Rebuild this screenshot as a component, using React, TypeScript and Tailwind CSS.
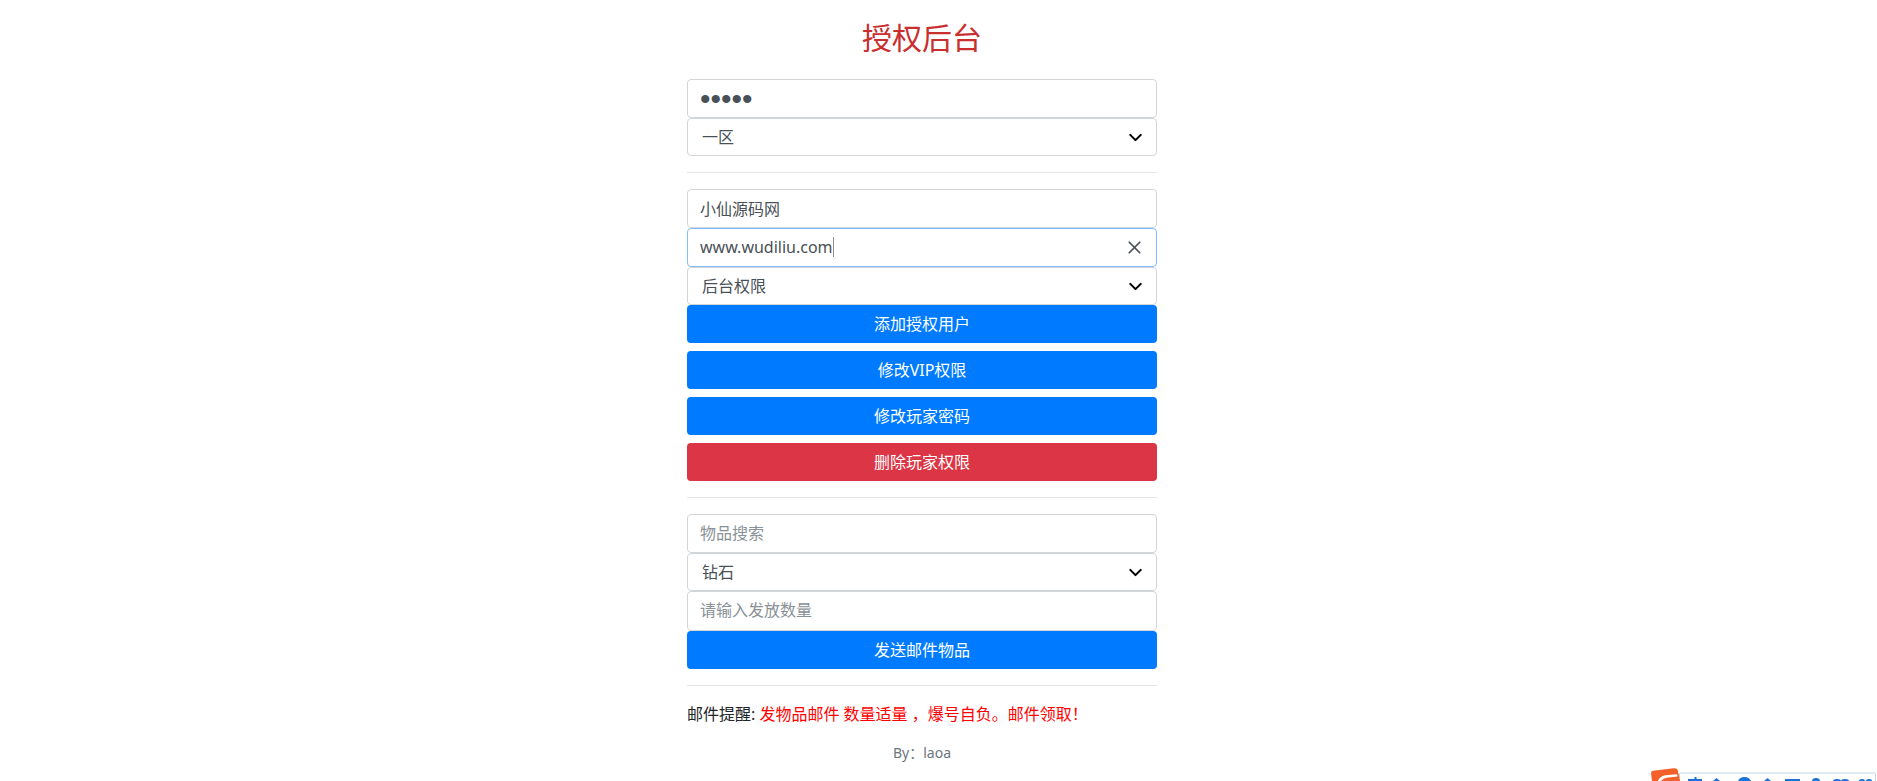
import { ChevronDown, X } from "lucide-react"

const FONT = "font-['Noto_Sans','Noto_Sans_CJK_SC',sans-serif]"

const fieldCls =
  "block w-full h-[39px] px-3 border border-[#d3d6d8] rounded bg-white text-[#495057] outline-none placeholder:text-[#8a9197]"

function Select({ value }: { value: string }) {
  return (
    <div className="relative h-[38px] border border-[#d3d6d8] rounded bg-white flex items-center pl-[14px] text-base text-[#495057]">
      <span>{value}</span>
      <ChevronDown className="absolute right-[10px] top-[8px] w-[21px] h-[21px] text-black" strokeWidth={2.4} />
    </div>
  )
}

function Button({ label, danger }: { label: string; danger?: boolean }) {
  return (
    <button
      className={
        "block w-full h-[38px] rounded text-base text-white " +
        (danger ? "bg-[#dc3545]" : "bg-[#007bff]")
      }
    >
      {label}
    </button>
  )
}

// input method toolbar, cut off by the bottom edge of the window
function ImeBar() {
  return (
    <svg className="absolute right-0 bottom-0 w-[227px] h-[13px]" viewBox="0 0 227 13">
      <rect x="29.5" y="5" width="196" height="12" rx="1" fill="#fff" stroke="#c3d3e3" />
      <path d="M1 5Q1 3 3 2.7L24 .3Q27 0 27.700 2L30 13H2Z" fill="#f4602a" />
      <path d="M9 11Q12 7 18 7L27 6.300 27.500 8.500 19 9.500Q14 9.500 11 13H8Z" fill="#fff" />
      <g fill="#1a73d8">
        <rect x="44.500" y="9" width="2" height="4" />
        <rect x="38" y="11" width="14" height="2" />
        <path d="M66.500 10L63 13H70Z" />
        <ellipse cx="94.500" cy="14" rx="6.500" ry="5" />
        <path d="M117.500 10L114 13H121Z" />
        <rect x="135" y="11" width="15" height="2" />
        <ellipse cx="166" cy="13.500" rx="4" ry="3.500" />
        <ellipse cx="187" cy="13" rx="4" ry="2" />
        <ellipse cx="195" cy="13" rx="4" ry="2" />
        <ellipse cx="212" cy="13" rx="3" ry="2" />
        <ellipse cx="219" cy="13" rx="3" ry="2" />
      </g>
    </svg>
  )
}

export default function App() {
  return (
    <div className={`relative h-[781px] overflow-hidden bg-white pr-[33px] ${FONT}`}>
      <div className="w-[470px] mx-auto pt-[15px]">
        <h1 className="h-[64px] text-center text-[30px] leading-[45px] text-[#c92f2f]">授权后台</h1>

        <input
          className={`${fieldCls} text-[30px] font-['Liberation_Sans',sans-serif]`}
          type="password"
          value="12345"
          readOnly
        />
        <Select value="一区" />
        <hr className="my-[16px] border-[#e5e5e5]" />

        <input className={`${fieldCls} text-base pb-[2px]`} value="小仙源码网" readOnly />
        <div className="relative h-[39px] px-3 pb-[2px] border border-[#80bdff] rounded bg-white flex items-center text-base text-[#495057]">
          <span>www.wudiliu.com</span>
          <span className="w-px h-5 bg-[#8c8c8c]" />
          <X className="absolute right-[11px] top-[8px] w-[21px] h-[21px] text-[#495057]" strokeWidth={2} />
        </div>
        <Select value="后台权限" />

        <div className="flex flex-col gap-2">
          <Button label="添加授权用户" />
          <Button label="修改VIP权限" />
          <Button label="修改玩家密码" />
          <Button label="删除玩家权限" danger />
        </div>
        <hr className="my-[16px] border-[#e5e5e5]" />

        <input className={`${fieldCls} text-base pb-[2px]`} placeholder="物品搜索" readOnly />
        <Select value="钻石" />
        <input className={`${fieldCls} !h-[40px] text-base pb-[2px]`} placeholder="请输入发放数量" readOnly />
        <Button label="发送邮件物品" />
        <hr className="my-[16px] border-[#e5e5e5]" />

        <p className="text-base leading-6 text-[#212529]">
          邮件提醒: <span className="text-[#ff0000]">发物品邮件 数量适量 ，爆号自负。邮件领取！</span>
        </p>
        <p className="mt-[16px] text-center text-sm leading-[21px] text-[#6c757d]">By：laoa</p>
      </div>
      <ImeBar />
    </div>
  )
}
